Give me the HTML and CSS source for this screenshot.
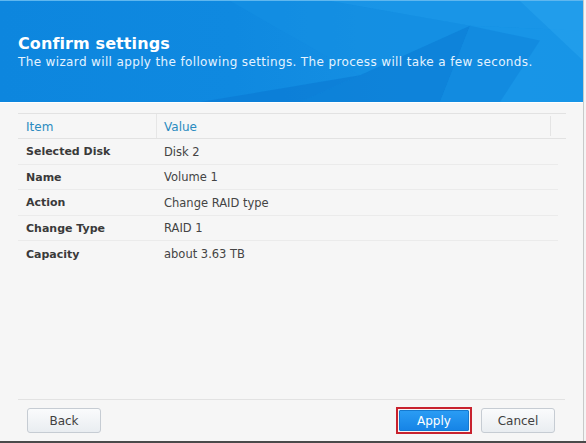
FILE: index.html
```html
<!DOCTYPE html>
<html>
<head>
<meta charset="utf-8">
<link rel="stylesheet" href="styles.css">
</head>
<body>
<div class="frame">
  <div class="dialog">
    <div class="header">
      <svg class="facets" viewBox="0 0 583 102" preserveAspectRatio="none" aria-hidden="true">
        <polygon points="330,0 583,0 583,30 470,25" fill="#1b97e8" opacity="0.7"/>
        <polygon points="470,25 583,30 583,102 440,102" fill="#1a9ae9" opacity="0.6"/>
        <polygon points="230,0 330,0 470,25 360,75" fill="#148fe3" opacity="0.6"/>
        <polygon points="360,75 470,25 440,102 300,102" fill="#0c7dd6" opacity="0.7"/>
        <polygon points="200,102 360,75 300,102" fill="#0a78d2" opacity="0.6"/>
        <polygon points="520,0 583,0 583,60" fill="#2aa6ef" opacity="0.5"/>
        <polygon points="470,25 540,40 500,102 440,102" fill="#0f86dc" opacity="0.6"/>
      </svg>
      <h1 class="title">Confirm settings</h1>
      <p class="subtitle">The wizard will apply the following settings. The process will take a few seconds.</p>
    </div>
    <div class="content">
      <div class="grid">
        <div class="grid-head">
          <div class="cell col-item">Item</div>
          <div class="cell col-value">Value</div>
          <div class="cell col-scroll"></div>
        </div>
        <div class="row"><div class="cell col-item label">Selected Disk</div><div class="cell col-value">Disk 2</div></div>
        <div class="row"><div class="cell col-item label">Name</div><div class="cell col-value">Volume 1</div></div>
        <div class="row"><div class="cell col-item label">Action</div><div class="cell col-value">Change RAID type</div></div>
        <div class="row"><div class="cell col-item label">Change Type</div><div class="cell col-value">RAID 1</div></div>
        <div class="row last"><div class="cell col-item label">Capacity</div><div class="cell col-value">about 3.63 TB</div></div>
      </div>
    </div>
    <div class="footer">
      <button class="btn">Back</button>
      <div class="spacer"></div>
      <div class="highlight"><button class="btn primary">Apply</button></div>
      <button class="btn">Cancel</button>
    </div>
  </div>
</div>
</body>
</html>
```
FILE: styles.css
```css
* { box-sizing: border-box; }
html, body { margin: 0; padding: 0; }
body {
  width: 586px;
  height: 443px;
  background: #f2f2f2;
  font-family: "DejaVu Sans", Verdana, sans-serif;
  overflow: hidden;
}
.frame {
  width: 586px;
  height: 443px;
  border-bottom: 2px solid #4a4a4a;
  background: #f4f4f4;
}
.dialog {
  width: 584px;
  height: 441px;
  border-right: 1px solid #c9c9c9;
  background: #f6f6f6;
  display: flex;
  flex-direction: column;
}
.header {
  position: relative;
  height: 102px;
  flex: none;
  background: linear-gradient(90deg, #0d86de 0%, #0f89e0 40%, #1690e3 70%, #1390e4 100%);
  border-top: 1px solid #5fb7ef;
  padding: 33px 18px 0 18px;
  overflow: hidden;
}
.facets {
  position: absolute;
  left: 0;
  top: 0;
  width: 100%;
  height: 100%;
}
.title {
  position: relative;
  margin: 0;
  font-size: 16px;
  font-weight: bold;
  color: #ffffff;
  line-height: 20px;
  letter-spacing: 0.1px;
}
.subtitle {
  position: relative;
  margin: 0;
  font-size: 12px;
  line-height: 16px;
  letter-spacing: 0.36px;
  color: #e4f3ff;
}
.content {
  flex: 1;
  padding: 10px 18px 0 18px;
  border-top: 1px solid #ffffff;
}
.grid {
  width: 548px;
  font-size: 11px;
  color: #444;
}
.grid-head {
  display: flex;
  height: 26px;
  border-top: 1px solid #e2e2e2;
  border-bottom: 1px solid #e2e2e2;
}
.grid-head .cell {
  color: #2a8bc0;
  font-size: 12px;
  padding-top: 2px;
}
.cell {
  display: flex;
  align-items: center;
  padding-left: 8px;
}
.col-item { width: 139px; }
.grid-head .col-item { border-right: 1px solid #e6e6e6; }
.col-value { flex: 1; padding-left: 7px; }
.grid-head .col-scroll { width: 16px; flex: none; border-left: 1px solid #e4e4e4; margin: 2px 0; padding: 0; }
.row {
  display: flex;
  height: 25.5px;
  border-bottom: 1px solid #ebebeb;
  margin-right: 8px;
}
.row .cell { font-size: 11.5px; color: #444; padding-top: 1px; }
.row .label { font-weight: bold; font-size: 11px; color: #3a3a3a; }
.row.last { border-bottom: none; }
.footer {
  flex: none;
  height: 42px;
  margin: 0 18px;
  border-top: 1px solid #e2e2e2;
  display: flex;
  align-items: flex-start;
  padding: 8px 10px 0 9px;
}
.spacer { flex: 1; }
.btn {
  width: 74px;
  height: 25px;
  border: 1px solid #c6ccd3;
  border-radius: 3px;
  background: linear-gradient(#fafbfc, #e9edf1);
  font-family: "DejaVu Sans", Verdana, sans-serif;
  font-size: 12px;
  color: #404040;
  padding: 0;
}
.highlight {
  margin-top: -1px;
  margin-right: 9px;
  border: 2px solid #c8222e;
  padding: 1px;
  display: flex;
}
.btn.primary {
  width: 70px;
  height: 21px;
  border: 1px solid #1579cf;
  border-radius: 1px;
  background: linear-gradient(#2a9cf4, #1684e6);
  color: #ffffff;
}
```
